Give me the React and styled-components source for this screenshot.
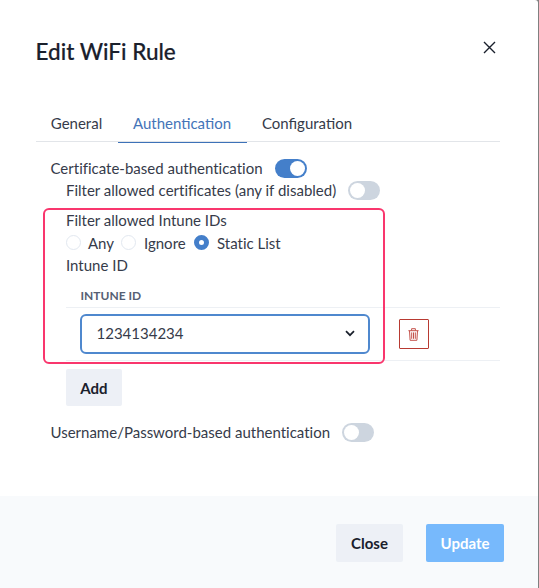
import React from "react";
import styled, { createGlobalStyle } from "styled-components";

const GlobalStyle = createGlobalStyle`
  * { box-sizing: border-box; }
  body { margin: 0; background: #808080; overflow: hidden; }
  button { font-family: inherit; border: 0; padding: 0; margin: 0; }
`;

const Dialog = styled.section`
  width: 538px;
  height: 588px;
  display: flex;
  flex-direction: column;
  background: #fff;
  border-top-right-radius: 3px;
  font-family: Lato, sans-serif;
  font-size: 15px;
  font-weight: 400;
  font-variant-ligatures: none;
  line-height: 22px;
  color: #363b4a;
`;

const Header = styled.header`
  height: 106px;
  display: flex;
  justify-content: space-between;
  align-items: flex-start;
  padding: 36px 42px 0 35.5px;
`;

const Title = styled.h1`
  margin: 0;
  font-size: 22.5px;
  line-height: 32px;
  font-weight: 500;
  -webkit-text-stroke: 0.2px #1a202c;
  color: #1a202c;
`;

const CloseIconButton = styled.button`
  width: 13px;
  height: 13px;
  margin-top: 5px;
  display: flex;
  background: none;
`;

const Tabs = styled.nav`
  height: 36px;
  margin: 0 38px 0 36px;
  display: flex;
  border-bottom: 1px solid #e2e5e9;
`;

const Tab = styled.button`
  width: ${(p) => p.$width}px;
  height: 37px;
  padding: 0 1px 2px 0;
  flex: none;
  background: none;
  font-size: 15px;
  font-weight: inherit;
  line-height: 22px;
  white-space: nowrap;
  color: ${(p) => (p.$active ? "#4474b8" : "#363b4a")};
  border-bottom: 1px solid ${(p) => (p.$active ? "#3d72b8" : "transparent")};
`;

const Body = styled.main`
  flex: 1;
  display: flex;
  flex-direction: column;
  padding: 16px 38px 0 50.5px;
`;

const SettingRow = styled.div`
  height: 22px;
  display: flex;
  align-items: center;
  gap: 12px;
  padding-bottom: 1px;
  margin-top: ${(p) => p.$top || 0}px;
`;

const Text = styled.span`
  line-height: 20px;
  padding-bottom: 1px;
  white-space: nowrap;
`;

const Switch = styled.span`
  width: 32px;
  height: 19px;
  padding: 2px;
  display: flex;
  justify-content: ${(p) => (p.$on ? "flex-end" : "flex-start")};
  border-radius: 10px;
  background: ${(p) => (p.$on ? "#447fca" : "#cdd5df")};
`;

const Knob = styled.span`
  width: 15px;
  height: 15px;
  border-radius: 50%;
  background: #fff;
`;

const Nested = styled.div`
  display: flex;
  flex-direction: column;
  padding-left: 15.5px;
`;

const FilterGroup = styled.section`
  position: relative;
  margin-top: 8px;
`;

const Highlight = styled.div`
  position: absolute;
  left: -23px;
  top: -2px;
  width: 342px;
  height: 156px;
  border: 2px solid #f9366d;
  border-radius: 6px;
  pointer-events: none;
`;

const RadioRow = styled.div`
  height: 23px;
  display: flex;
  align-items: center;
  padding-bottom: 1px;
`;

const RadioOption = styled.label`
  width: ${(p) => p.$width}px;
  display: flex;
  align-items: center;
  gap: ${(p) => p.$gap}px;
`;

const Radio = styled.span`
  width: 15px;
  height: 15px;
  margin-bottom: 1px;
  flex: none;
  border-radius: 50%;
  background: #fff;
  border: ${(p) => (p.$checked ? "5px solid #447fca" : "1px solid #e2e8f0")};
`;

const TableHead = styled.div`
  height: 31px;
  padding: 9px 14.5px 0;
  border-bottom: 1px solid #edf0f4;
  font-size: 12px;
  line-height: 20px;
  font-weight: 700;
  color: #566074;
`;

const TableRow = styled.div`
  height: 53px;
  display: flex;
  align-items: center;
  padding-left: 14px;
  gap: 29px;
  border-bottom: 1px solid #edf0f4;
`;

const Select = styled.div`
  width: 290px;
  height: 40px;
  display: flex;
  justify-content: space-between;
  align-items: center;
  padding: 0 13px 1px 14.5px;
  border: 2px solid #4f88ce;
  border-radius: 6px;
`;

const DeleteButton = styled.button`
  width: 30px;
  height: 30px;
  display: flex;
  justify-content: center;
  align-items: center;
  padding-right: 1px;
  background: #fff;
  border: 1px solid #b83a32;
  border-radius: 1px;
`;

const Button = styled.button`
  width: ${(p) => p.$width}px;
  height: ${(p) => p.$height || 38}px;
  background: ${(p) => (p.$primary ? "#77b9fc" : "#edf0f6")};
  color: ${(p) => (p.$primary ? "#fff" : "#1a202c")};
  border-radius: 2px;
  font-size: 15px;
  font-weight: 700;
`;

const AddButton = styled(Button)`
  margin-top: 8px;
`;

const Footer = styled.footer`
  height: 92px;
  display: flex;
  justify-content: flex-end;
  gap: 23px;
  padding: 28px 34px 0 0;
  background: #f8fafc;
`;

const Toggle = ({ on }) => (
  <Switch $on={on}>
    <Knob />
  </Switch>
);

const CloseIcon = () => (
  <svg width="13" height="13" viewBox="0 0 13 13" fill="none" stroke="#1a202c" strokeWidth="1.4">
    <path d="M1 1L12 12M12 1L1 12" />
  </svg>
);

const ChevronIcon = () => (
  <svg width="10" height="7" viewBox="0 0 10 7" fill="none" stroke="#1a202c" strokeWidth="1.7">
    <path d="M1 1.2L5 5.2L9 1.2" />
  </svg>
);

const TrashIcon = () => (
  <svg width="11" height="13" viewBox="0 0 11 13" fill="none" stroke="#c4524b" strokeWidth="1">
    <path d="M0.4 2.7H10.6M3.6 2.6V0.7H7.4V2.6M1.5 2.8L2.1 12.3H8.9L9.5 2.8M3.7 4.4V10.8M5.5 4.4V10.8M7.3 4.4V10.8" />
  </svg>
);

export default function App() {
  return (
    <>
      <GlobalStyle />
      <Dialog>
        <Header>
          <Title>Edit WiFi Rule</Title>
          <CloseIconButton aria-label="Close dialog">
            <CloseIcon />
          </CloseIconButton>
        </Header>
        <Tabs>
          <Tab $width={82}>General</Tab>
          <Tab $width={129} $active>Authentication</Tab>
          <Tab $width={121}>Configuration</Tab>
        </Tabs>
        <Body>
          <SettingRow>
            <Text>Certificate-based authentication</Text>
            <Toggle on />
          </SettingRow>
          <Nested>
            <SettingRow>
              <Text>Filter allowed certificates (any if disabled)</Text>
              <Toggle />
            </SettingRow>
            <FilterGroup>
              <SettingRow>
                <Text>Filter allowed Intune IDs</Text>
              </SettingRow>
              <RadioRow>
                <RadioOption $width={55} $gap={7}><Radio /><Text>Any</Text></RadioOption>
                <RadioOption $width={73} $gap={8}><Radio /><Text>Ignore</Text></RadioOption>
                <RadioOption $width={100} $gap={8}><Radio $checked /><Text>Static List</Text></RadioOption>
              </RadioRow>
              <SettingRow>
                <Text>Intune ID</Text>
              </SettingRow>
              <TableHead>INTUNE ID</TableHead>
              <TableRow>
                <Select>
                  <Text>1234134234</Text>
                  <ChevronIcon />
                </Select>
                <DeleteButton aria-label="Delete">
                  <TrashIcon />
                </DeleteButton>
              </TableRow>
              <Highlight />
            </FilterGroup>
            <AddButton $width={56} $height={37}>Add</AddButton>
          </Nested>
          <SettingRow $top={16}>
            <Text>Username/Password-based authentication</Text>
            <Toggle />
          </SettingRow>
        </Body>
        <Footer>
          <Button $width={67}>Close</Button>
          <Button $width={78} $primary>Update</Button>
        </Footer>
      </Dialog>
    </>
  );
}
